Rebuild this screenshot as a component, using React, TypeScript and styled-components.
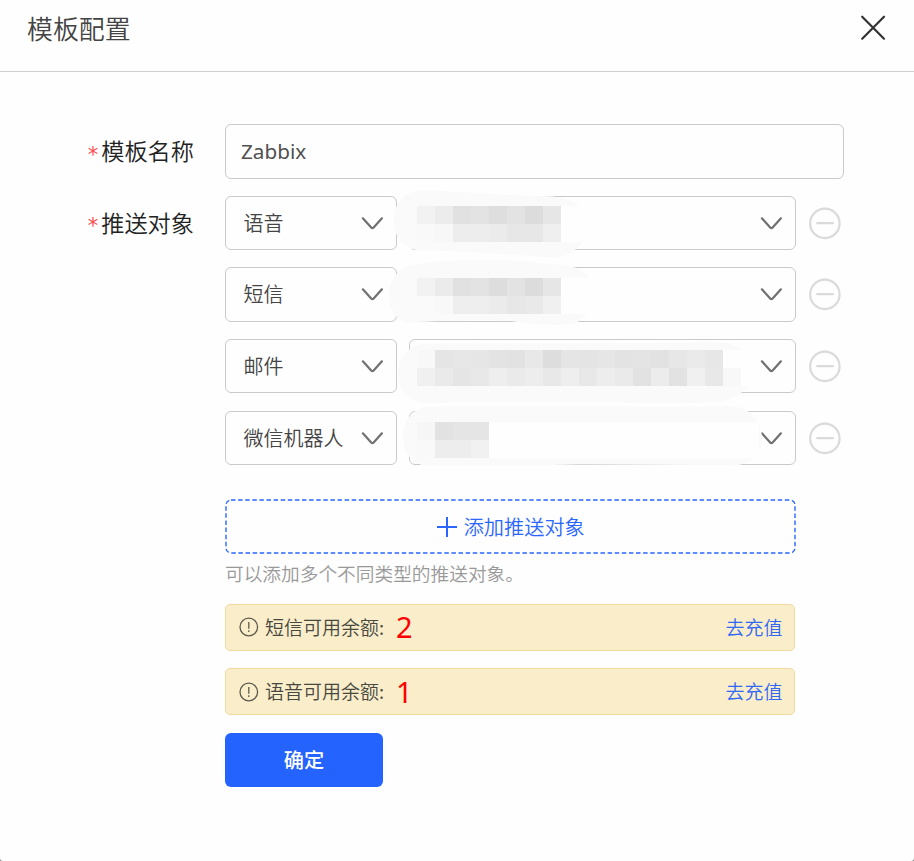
import React from "react";
import styled, { createGlobalStyle } from "styled-components";

const GlobalStyle = createGlobalStyle`
  *, *::before, *::after { box-sizing: border-box; }
  body {
    margin: 0;
    background: #8a8a8a;
    font-family: "Noto Sans", "Noto Sans CJK SC", sans-serif;
    font-weight: 400;
    color: #444;
  }
`;

const Dialog = styled.main`
  height: 861px;
  background: #fefefe;
  border-radius: 0 0 3px 3px;
  overflow: hidden;
`;

const Header = styled.header`
  display: flex;
  align-items: center;
  justify-content: space-between;
  height: 72px;
  padding: 0 28px 16px 27px;
  border-bottom: 1px solid #d0d0d0;
`;

const Title = styled.h1`
  margin: 0;
  font: 350 25.9px/36px "Noto Sans CJK SC", sans-serif;
  color: #444;
`;

const CloseButton = styled.button`
  display: flex;
  padding: 0;
  border: 0;
  background: none;
  color: #333;
`;

const Form = styled.form`
  display: grid;
  grid-template-columns: 194px 619px;
  column-gap: 31px;
  row-gap: 17px;
  padding-top: 52px;
`;

const Label = styled.label`
  display: flex;
  align-items: center;
  justify-content: flex-end;
  gap: 3px;
  height: 54.67px;
  padding-bottom: 2px;
  font: 350 23.2px/34px "Noto Sans CJK SC", sans-serif;
  color: #222;
`;

const Required = styled.span`
  padding-top: 9px;
  font: 400 21px/26px "DejaVu Sans", sans-serif;
  color: #ff4d4f;
`;

const NameInput = styled.input`
  width: 619px;
  height: 54.67px;
  padding: 0 15px 1px;
  border: 1px solid #cacaca;
  border-radius: 6px;
  outline: 0;
  background: #fefefe;
  font: 400 20.7px "Noto Sans", sans-serif;
  color: #505050;
`;

const Targets = styled.div`
  display: flex;
  flex-direction: column;
  gap: 17.33px;
`;

const TargetRow = styled.div`
  position: relative;
  display: grid;
  grid-template-columns: 172px 387px 34px;
  column-gap: 11.5px;
  align-items: center;
  height: 54.33px;
`;

const Select = styled.div`
  display: flex;
  align-items: center;
  justify-content: space-between;
  height: 54.33px;
  padding: 0 12px 0 17.5px;
  border: 1px solid #cacaca;
  border-radius: 6px;
  font: 350 20px/28px "Noto Sans CJK SC", sans-serif;
  color: #444;
  white-space: nowrap;
`;

const Chevron = styled.svg`
  flex: none;
  margin-left: auto;
`;

const RemoveButton = styled.button`
  display: flex;
  margin-left: 1.5px;
  padding: 0;
  border: 0;
  background: none;
  color: #dadada;
`;

const Redaction = styled.svg`
  position: absolute;
  inset: 0 auto auto 0;
  overflow: visible;
  pointer-events: none;
`;

const Content = styled.div`
  display: flex;
  flex-direction: column;
  width: 570.4px;
  margin-left: 225px;
`;

const AddButton = styled.button`
  position: relative;
  display: flex;
  align-items: center;
  justify-content: center;
  gap: 7px;
  height: 55px;
  margin-top: 34px;
  padding: 1px 0 0 1px;
  border: 0;
  background: none;
  font: 350 20.2px/28px "Noto Sans CJK SC", sans-serif;
  color: #2a66ff;
`;

const DashedFrame = styled.svg`
  position: absolute;
  inset: 0;
`;

const Hint = styled.p`
  height: 28px;
  margin: 5px 0 1px;
  font: 350 18.7px/28px "Noto Sans CJK SC", sans-serif;
  color: #999;
`;

const Balance = styled.div<{ $spaced?: boolean }>`
  display: flex;
  align-items: center;
  height: 47px;
  margin-top: ${(p) => (p.$spaced ? "17.5px" : "16px")};
  padding: 0 12px 0 13px;
  border: 1px solid #efdba0;
  border-radius: 5px;
  background: #f9edca;
  font: 350 19px/28px "Noto Sans CJK SC", sans-serif;
  color: #484840;
`;

const BalanceLabel = styled.span`
  width: 131px;
  margin: 0 0 1px 6px;
  white-space: nowrap;
`;

const Amount = styled.span`
  font: 400 29px/40px "Noto Sans", sans-serif;
  color: #f00;
`;

const RechargeLink = styled.a`
  margin: 0 0 1px auto;
  color: #3168f5;
`;

const SubmitButton = styled.button`
  width: 158px;
  height: 54px;
  margin-top: 17.5px;
  padding: 0;
  border: 0;
  border-radius: 6px;
  background: #2563ff;
  font: 500 20.2px/28px "Noto Sans CJK SC", sans-serif;
  color: #fff;
`;

const ChevronIcon = () => (
  <Chevron width="23" height="14" viewBox="0 0 23 14" fill="none" stroke="#707070" strokeWidth="2.2" strokeLinecap="round" strokeLinejoin="round">
    <path d="M1.9 2.3 L10.4 11.7 Q11.4 12.6 12.4 11.7 L20.9 2.3" />
  </Chevron>
);

const MinusIcon = () => (
  <svg width="34" height="34" viewBox="0 0 34 34" fill="none" stroke="currentColor" strokeWidth="2.3" strokeLinecap="round">
    <circle cx="16.6" cy="17.4" r="15.4" />
    <path d="M8.6 17.2h16.4" />
  </svg>
);

const InfoIcon = () => (
  <svg width="20" height="20" viewBox="0 0 20 20" fill="none" stroke="#5f5b4e" strokeWidth="1.3">
    <circle cx="9.8" cy="10" r="8.8" />
    <path d="M9.8 5v6.7M9.8 13.2v1.8" />
  </svg>
);

type Target = {
  kind: string;
  top: number;
  blob: string;
  gridX: number;
  gridY: number;
  tones: number[][];
  clear?: [number, number, number, number][];
};

const targets: Target[] = [
  {
    kind: "语音",
    top: 195.67,
    blob: "M394 219 C394 202 406 190 423 190 C460 191 500 195 550 196 Q567 197 580 206 H561 V242 H583 Q570 257 555 257 C510 255 460 250 418 250 C402 247 394 237 394 219Z",
    gridX: 417,
    gridY: 206,
    tones: [
      [242, 236, 225, 227, 222, 227, 220, 230],
      [249, 247, 237, 237, 235, 231, 231, 239],
    ],
  },
  {
    kind: "短信",
    top: 267.33,
    blob: "M389 295 C389 279 400 264 422 264 C455 259 500 260 530 262 C550 266 581 262 589 278 H561 V314 H587 Q577 326 565 325 C540 326 524 323 510 321 C470 320 435 321 410 323 C397 322 389 311 389 295Z",
    gridX: 417,
    gridY: 278,
    tones: [
      [242, 235, 225, 227, 221, 227, 220, 230],
      [250, 248, 238, 238, 235, 231, 233, 240],
    ],
  },
  {
    kind: "邮件",
    top: 339,
    blob: "M398 375 C398 357 410 344 427 344 C530 343 630 344 708 342 Q733 341 742 350 H723 V368 H741 V386 H748 Q734 403 711 402 C650 405 560 400 430 403 C410 404 398 390 398 375Z",
    gridX: 417,
    gridY: 350,
    tones: [
      [248, 229, 231, 230, 227, 226, 232, 221, 229, 228, 230, 227, 228, 226, 231, 234, 231],
      [240, 234, 229, 232, 238, 234, 237, 232, 238, 232, 237, 234, 226, 236, 226, 240, 232, 248],
    ],
  },
  {
    kind: "微信机器人",
    top: 410.67,
    blob: "M403 437 C403 419 414 406 433 406 H733 C750 407 762 422 762 438 C762 453 752 464 735 465 L580 464 C530 466 470 465 422 465 C408 460 403 449 403 437Z",
    gridX: 417,
    gridY: 422,
    tones: [
      [246, 226, 229, 229],
      [249, 237, 237, 241],
    ],
    clear: [[489, 422, 270, 36]],
  },
];

const RedactedValue = ({ target }: { target: Target }) => (
  <Redaction width="571" height="54.33" viewBox={`225 ${target.top} 571 54.33`} aria-hidden="true">
    <path d={target.blob} fill="#fafafa" />
    {target.clear?.map(([x, y, w, h]) => (
      <rect key={x} x={x} y={y} width={w} height={h} fill="#fefefe" />
    ))}
    {target.tones.map((line, r) =>
      line.map((tone, c) => (
        <rect
          key={`${r}-${c}`}
          x={target.gridX + c * 18}
          y={target.gridY + r * 18}
          width="18"
          height="18"
          fill={`rgb(${tone},${tone},${tone})`}
          shapeRendering="crispEdges"
        />
      ))
    )}
  </Redaction>
);

const balances = [
  { label: "短信可用余额:", amount: 2 },
  { label: "语音可用余额:", amount: 1 },
];

export default function App() {
  return (
    <>
      <GlobalStyle />
      <Dialog>
        <Header>
          <Title>模板配置</Title>
          <CloseButton type="button" aria-label="关闭">
            <svg width="26" height="26" viewBox="0 0 26 26" fill="none" stroke="currentColor" strokeWidth="2.2" strokeLinecap="round">
              <path d="M2.2 1.7l21.8 22M24 1.7l-21.8 22" />
            </svg>
          </CloseButton>
        </Header>
        <Form>
          <Label htmlFor="name">
            <Required>*</Required>模板名称
          </Label>
          <NameInput id="name" defaultValue="Zabbix" />
          <Label as="div">
            <Required>*</Required>推送对象
          </Label>
          <Targets>
            {targets.map((target) => (
              <TargetRow key={target.kind}>
                <Select>
                  {target.kind}
                  <ChevronIcon />
                </Select>
                <Select>
                  <ChevronIcon />
                </Select>
                <RemoveButton type="button" aria-label="删除">
                  <MinusIcon />
                </RemoveButton>
                <RedactedValue target={target} />
              </TargetRow>
            ))}
          </Targets>
        </Form>
        <Content>
          <AddButton type="button">
            <DashedFrame width="571" height="55" fill="none" stroke="#2a66ff" strokeWidth="1.4" strokeDasharray="4.5 2.6">
              <rect x="1" y="1" width="569" height="53" rx="5" />
            </DashedFrame>
            <svg width="20" height="20" viewBox="0 0 20 20" stroke="currentColor" strokeWidth="2">
              <path d="M0 10h20M10 0v20" />
            </svg>
            添加推送对象
          </AddButton>
          <Hint>可以添加多个不同类型的推送对象。</Hint>
          {balances.map((b, i) => (
            <Balance key={b.label} $spaced={i > 0}>
              <InfoIcon />
              <BalanceLabel>{b.label}</BalanceLabel>
              <Amount>{b.amount}</Amount>
              <RechargeLink>去充值</RechargeLink>
            </Balance>
          ))}
          <SubmitButton type="button">确定</SubmitButton>
        </Content>
      </Dialog>
    </>
  );
}
